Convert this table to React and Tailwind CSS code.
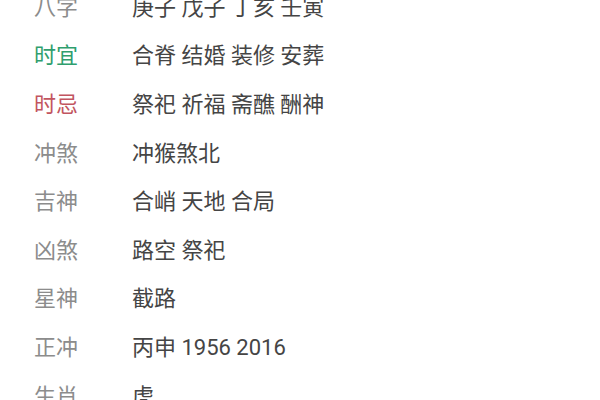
import React from "react";

const rows = [
  { label: "八字", value: "庚子 戊子 丁亥 壬寅", tone: "text-[#8c8c8c]" },
  { label: "时宜", value: "合脊 结婚 装修 安葬", tone: "text-[#2f9e6e]" },
  { label: "时忌", value: "祭祀 祈福 斋醮 酬神", tone: "text-[#c25560]" },
  { label: "冲煞", value: "冲猴煞北", tone: "text-[#8c8c8c]" },
  { label: "吉神", value: "合峭 天地 合局", tone: "text-[#8c8c8c]" },
  { label: "凶煞", value: "路空 祭祀", tone: "text-[#8c8c8c]" },
  { label: "星神", value: "截路", tone: "text-[#8c8c8c]" },
  { label: "正冲", value: "丙申 1956 2016", tone: "text-[#8c8c8c]" },
  { label: "生肖", value: "虎", tone: "text-[#8c8c8c]" },
];

export default function App() {
  return (
    <div
      className="w-[600px] h-[400px] overflow-hidden bg-white"
      style={{ fontFamily: '"Roboto", "Noto Sans CJK SC", sans-serif' }}
    >
      <div className="-mt-[17px] pl-[34px]">
        {rows.map((r) => (
          <div key={r.label} className="flex items-center h-[48.6px] text-[22px]">
            <span className={`w-[98px] ${r.tone}`}>{r.label}</span>
            <span className="text-[#454545]">{r.value}</span>
          </div>
        ))}
      </div>
    </div>
  );
}
